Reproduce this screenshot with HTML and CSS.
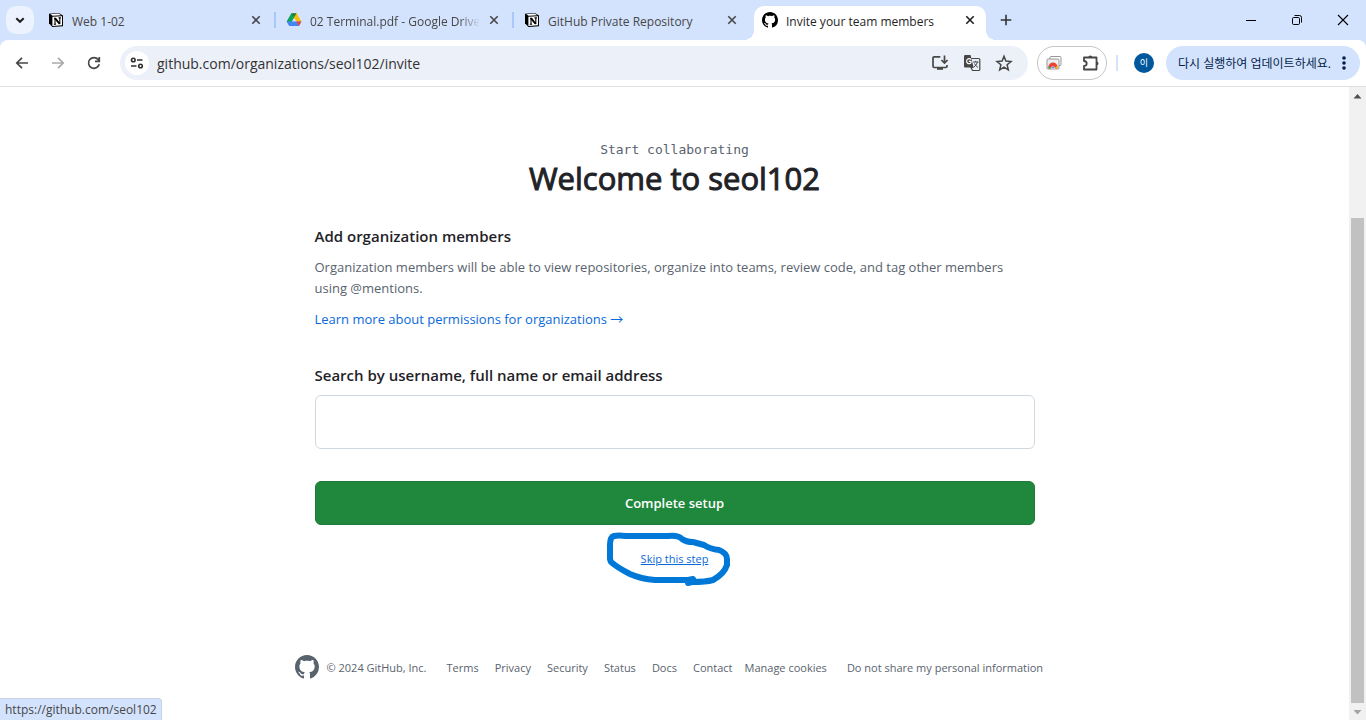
FILE: index.html
```html
<!DOCTYPE html>
<html lang="en">
<head>
<meta charset="utf-8">
<title>Invite your team members</title>
<link rel="stylesheet" href="styles.css">
</head>
<body>
<svg class="defs" aria-hidden="true">
  <symbol id="github" viewBox="0 0 16 16"><path d="M8 0C3.58 0 0 3.58 0 8c0 3.54 2.29 6.53 5.47 7.59.4.07.55-.17.55-.38 0-.19-.01-.82-.01-1.49-2.01.37-2.53-.49-2.69-.94-.09-.23-.48-.94-.82-1.13-.28-.15-.68-.52-.01-.53.63-.01 1.08.58 1.23.82.72 1.21 1.87.87 2.33.66.07-.52.28-.87.51-1.07-1.78-.2-3.64-.89-3.64-3.95 0-.87.31-1.59.82-2.15-.08-.2-.36-1.02.08-2.12 0 0 .67-.21 2.2.82.64-.18 1.32-.27 2-.27s1.36.09 2 .27c1.53-1.04 2.2-.82 2.2-.82.44 1.1.16 1.92.08 2.12.51.56.82 1.27.82 2.15 0 3.07-1.87 3.75-3.65 3.95.29.25.54.73.54 1.48 0 1.07-.01 1.93-.01 2.2 0 .21.15.46.55.38A8.01 8.01 0 0 0 16 8c0-4.42-3.58-8-8-8z"/></symbol>
  <symbol id="notion" viewBox="0 0 16 16"><path d="M1 1.8 10.8.9 15 3.6V14.2L4.4 15 1 11.2z" fill="#000"/><path d="M2.4 2.2 10.6 1.5 13.2 3.2 4.6 3.8z" fill="#fff"/><path d="M4.4 4.8 14 4.2V13.3L4.4 13.9z" fill="#fff"/><path d="M6 6.2h1.5l4 5.4M7 6v6.2M11.8 5.8v6.2M5.8 12.2h2.3M10.5 5.9h2.4" fill="none" stroke="#000" stroke-width="1.1"/><path d="M7 6.4l4.7 5.6" stroke="#000" stroke-width="1.7"/></symbol>
  <symbol id="close" viewBox="0 0 16 16"><path d="M4.3 4.3l7.4 7.4M11.7 4.3l-7.4 7.4" fill="none" stroke="currentColor" stroke-width="1.6"/></symbol>
</svg>
<div class="browser">
  <header class="tabstrip">
    <button class="tabsearch" aria-label="Search tabs"><svg class="icon" viewBox="0 0 16 16"><path d="M4.3 6.2 8 9.8l3.7-3.6" fill="none" stroke="#1f1f1f" stroke-width="2"/></svg></button>
    <nav class="tabs" aria-label="Tabs">
      <div class="tab"><svg class="icon"><use href="#notion"/></svg><span class="tab-title">Web 1-02</span><button class="tab-close" aria-label="Close tab"><svg class="icon"><use href="#close"/></svg></button></div>
      <div class="tab"><svg class="icon" viewBox="0 0 16 16"><path d="M5.5 1.3h5L8 5.6 3.4 13.8.8 9.6z" fill="#12a15b"/><path d="M5.5 1.3h5l4.9 8.3h-5z" fill="#fbbc04"/><path d="M5.5 1.3 8 5.6 5.6 9.6H.8z" fill="#12a15b"/><path d="M5.5 1.3h5L8 5.6z" fill="#168043"/><path d="M.7 9.6h9.7l5 0-2.6 4.4H3.3z" fill="#4285f4"/><path d="M10.4 9.6h5l-2.6 4.4z" fill="#ea4335"/></svg><span class="tab-title tab-title-fade">02 Terminal.pdf - Google Drive</span><button class="tab-close" aria-label="Close tab"><svg class="icon"><use href="#close"/></svg></button></div>
      <div class="tab tab-last"><svg class="icon"><use href="#notion"/></svg><span class="tab-title">GitHub Private Repository</span><button class="tab-close" aria-label="Close tab"><svg class="icon"><use href="#close"/></svg></button></div>
      <div class="tab tab-active"><svg class="icon"><use href="#github"/></svg><span class="tab-title">Invite your team members</span><button class="tab-close" aria-label="Close tab"><svg class="icon"><use href="#close"/></svg></button></div>
    </nav>
    <button class="newtab" aria-label="New tab"><svg class="icon" viewBox="0 0 16 16"><path d="M8 2.7v10.6M2.7 8h10.6" stroke="#333" stroke-width="1.6"/></svg></button>
    <div class="window-controls">
      <button aria-label="Minimize"><svg class="icon" viewBox="0 0 16 16"><path d="M3 8.5h10" stroke="#000"/></svg></button>
      <button aria-label="Restore"><svg class="icon" viewBox="0 0 16 16" fill="none" stroke="#000"><rect x="3.5" y="5.5" width="7" height="7" rx="1.2"/><path d="M5.5 3.5h5a2 2 0 0 1 2 2v5"/></svg></button>
      <button aria-label="Close"><svg class="icon" viewBox="0 0 16 16"><path d="M3 3l10 10M13 3 3 13" stroke="#000" stroke-width="1.1"/></svg></button>
    </div>
  </header>
  <div class="toolbar-wrap">
  <div class="toolbar">
    <div class="nav-buttons">
      <button aria-label="Back"><svg class="icon" viewBox="0 0 16 16" fill="none" stroke="#474747" stroke-width="1.7"><path d="M14 8H3M8 2.8 2.8 8 8 13.2"/></svg></button>
      <button aria-label="Forward" disabled><svg class="icon" viewBox="0 0 16 16" fill="none" stroke="#a9a9a9" stroke-width="1.7"><path d="M2 8h11M8 2.8 13.2 8 8 13.2"/></svg></button>
      <button aria-label="Reload"><svg class="icon" viewBox="0 0 16 16" fill="none" stroke="#474747" stroke-width="1.7"><path d="M13.2 9.2A5.4 5.4 0 1 1 12.2 4.6L13 5.8M13.3 2v4.4H9"/></svg></button>
    </div>
    <div class="omnibox">
      <button class="site-info" aria-label="View site information"><svg class="icon" viewBox="0 0 16 16" fill="none" stroke="#303030" stroke-width="1.6"><circle cx="4.3" cy="5" r="1.8"/><path d="M8 5h5.5M2 11h5.5"/><circle cx="11.5" cy="11" r="1.8"/></svg></button>
      <input class="url" type="text" aria-label="Address" value="github.com/organizations/seol102/invite">
      <div class="omni-actions">
        <button aria-label="Install app"><svg class="icon" viewBox="0 0 18 18" fill="none" stroke="#474747" stroke-width="1.7"><path d="M9.3 2.8H3.2q-1.2 0-1.2 1.2v8.3q0 1.2 1.2 1.2h11.6q1.2 0 1.2-1.2V11M13.5 1.5v7M10.4 6l3.1 3.1L16.6 6"/><path d="M6 14.8h6" stroke-width="2"/></svg></button>
        <button aria-label="Translate"><svg class="icon" viewBox="0 0 18 18"><path d="M2.2 1h5.4l3 12.5H2.2Q1 13.500 1 12.300V2.200Q1 1 2.200 1z" fill="#474747"/><path d="M8.300 4.500h7.500q1 0 1 1v10q0 1-1 1H9.500L8 13.500h2.600" fill="none" stroke="#474747" stroke-width="1.200"/><path d="M8 5.500A2.500 2.500 0 1 0 8 8.800V7.400H5.800" fill="none" stroke="#fff" stroke-width="1.200"/><path d="M10 8h5.500M12.700 6.800V8M14.500 8q-.8 3-3.500 5M11.500 9.500q1 2.300 3.500 4" fill="none" stroke="#474747"/></svg></button>
        <button aria-label="Bookmark"><svg class="icon" viewBox="0 0 18 18"><path d="M9 2.300l1.900 4.800 5.100.4-3.900 3.300 1.200 5L9 13.100l-4.300 2.700 1.200-5L2 7.500l5.100-.4z" fill="none" stroke="#474747" stroke-width="1.500"/></svg></button>
      </div>
    </div>
    <div class="extensions">
      <button aria-label="Extension"><svg class="icon" viewBox="0 0 18 18"><rect x="5" y="2.500" width="11" height="9" rx="1" fill="#fff" stroke="#999"/><rect x="2" y="5" width="12" height="10" rx="1" fill="#eee" stroke="#999"/><path d="M3.500 14.500V13a4.500 4.500 0 0 1 9 0v1.500z" fill="#ea4335"/><path d="M3.500 11.500 6.500 14.500h-3z" fill="#34a853"/><path d="M12.500 11.500v3h-3z" fill="#fbbc04"/><path d="M6 14.500a2 2 0 0 1 4 0z" fill="#4285f4" stroke="#fff" stroke-width=".5"/></svg></button>
      <button aria-label="Extensions"><svg class="icon" viewBox="0 0 18 18"><path d="M2 3.500h12.500V15.500H2V12q2.700-.2 2.700-2.500T2 7z" fill="none" stroke="#474747" stroke-width="1.800" stroke-linejoin="round"/><path d="M6.300 3.500a2 2 0 0 1 4 0zM14.500 7.500a2 2 0 0 1 0 4z" fill="#474747"/></svg></button>
    </div>
    <span class="divider"></span>
    <button class="avatar" aria-label="Profile">이</button>
    <button class="update"><span>다시 실행하여 업데이트하세요.</span><svg class="icon" viewBox="0 0 16 16" fill="#041e49"><circle cx="8" cy="3" r="1.800"/><circle cx="8" cy="8" r="1.800"/><circle cx="8" cy="13" r="1.800"/></svg></button>
  </div>
  </div>
  <div class="viewport">
    <div class="page">
      <main class="content">
        <div class="hero">
          <p class="eyebrow">Start collaborating</p>
          <h1>Welcome to seol102</h1>
        </div>
        <h2>Add organization members</h2>
        <p class="description">Organization members will be able to view repositories, organize into teams, review code, and tag other members using @mentions.</p>
        <a class="learn" href="#">Learn more about permissions for organizations →</a>
        <form class="invite">
          <label for="member">Search by username, full name or email address</label>
          <input id="member" type="text">
          <button type="button">Complete setup</button>
        </form>
        <div class="skip">
          <a href="#">Skip this step</a>
          <svg class="scribble" viewBox="0 0 126 56" aria-hidden="true"><path d="M4 27V13Q4 5 8 4Q12 3 20 4H62Q72 3 76 7Q80 10 87 10L98 13Q104 17 113 18Q121 21 121 27V33Q118 42 107 48Q100 50 86 50L82 51L87 47L82 48H49Q35 47 24 42Q12 36 5 30Q4 28 4 26" fill="none" stroke="#0078d7" stroke-width="6" stroke-linejoin="round" stroke-linecap="round"/></svg>
        </div>
      </main>
      <footer class="footer">
        <svg class="footer-logo"><use href="#github"/></svg>
        <span class="copyright">© 2024 GitHub, Inc.</span>
        <nav class="footer-links" aria-label="Footer">
          <a href="#">Terms</a><a href="#">Privacy</a><a href="#">Security</a><a href="#">Status</a><a href="#">Docs</a><a href="#">Contact</a>
        </nav>
        <button class="cookies">Manage cookies</button>
        <button class="personal">Do not share my personal information</button>
      </footer>
    </div>
    <div class="scrollbar" aria-hidden="true">
      <svg class="arrow" viewBox="0 0 17 17"><path d="M4.500 11.500h8l-4-4.500z" fill="#505050"/></svg>
      <div class="track"><div class="thumb"></div></div>
      <svg class="arrow" viewBox="0 0 17 17"><path d="M4.500 7h8l-4 4.500z" fill="#a3a3a3"/></svg>
    </div>
    <div class="status">https://github.com/seol102</div>
  </div>
</div>
</body>
</html>
```

FILE: styles.css
```css
* { box-sizing: border-box; }
body {
  margin: 0;
  font-family: "Open Sans", "Noto Sans", "Noto Sans CJK KR", sans-serif;
  font-size: 12px;
  color: #1f2328;
  background: #fff;
}
button { padding: 0; border: 0; background: none; font: inherit; color: inherit; }
button, .icon { flex: none; }
a { color: #0969da; text-decoration: none; }
p, h1, h2 { margin: 0; }
.defs { position: absolute; width: 0; height: 0; }
.icon { display: block; width: 16px; height: 16px; }
.browser { display: flex; flex-direction: column; height: 100vh; background: #d3e3fd; }

/* Tab strip */
.tabstrip { display: flex; align-items: center; height: 40px; padding-left: 6px; color: #474747; }
.tabsearch { display: grid; place-items: center; width: 28px; height: 28px; border-radius: 10px; background: #ecf2fe; }
.tabs { display: flex; gap: 6px; flex: 0 1 946px; min-width: 0; margin-left: 6px; align-self: flex-end; }
.tab { position: relative; display: flex; align-items: center; flex: 1 1 0; min-width: 0; height: 34px; padding: 0 8px; padding-bottom: 6px; border-radius: 10px 10px 0 0; }
.tab:not(.tab-active)::after { content: ""; position: absolute; right: -4px; top: 6px; width: 2px; height: 16px; background: #a8c7fa; }
.tab.tab-last::after { display: none; }
.tab-title { flex: 1; margin: 2px 6px 0 8px; overflow: hidden; white-space: nowrap; }
.tab-title-fade { mask-image: linear-gradient(to right, #000 88%, transparent); }
.tab-close { display: block; }
.tab-active { background: #fff; color: #1f1f1f; }
.tab-active::before, .tab-active::after { content: ""; position: absolute; bottom: 0; width: 10px; height: 10px; }
.tab-active::before { left: -10px; background: radial-gradient(circle at 0 0, transparent 10px, #fff 10px); }
.tab-active::after { right: -10px; background: radial-gradient(circle at 100% 0, transparent 10px, #fff 10px); }
.newtab { margin-left: 12px; }
.window-controls { display: flex; margin-left: auto; }
.window-controls button { display: grid; place-items: center; width: 46px; height: 40px; }

/* Toolbar */
.toolbar-wrap { border-bottom: 1px solid #dfe1e5; border-radius: 8px 8px 0 0; background: #fff; }
.toolbar { display: flex; align-items: center; height: 46px; padding: 0 6px 0 14px; }
.nav-buttons { display: flex; gap: 20px; }
.omnibox { display: flex; align-items: center; flex: 1; height: 34px; margin: 0 9px 0 18px; padding: 0 15px 0 5px; border-radius: 17px; background: #ecf0f9; }
.site-info { display: grid; place-items: center; width: 24px; height: 24px; border-radius: 12px; background: #fff; }
.url { flex: 1; min-width: 0; margin-left: 8px; padding: 0; border: 0; background: none; font: 14px "Open Sans", sans-serif; color: #333; outline: 0; }
.omni-actions { display: flex; gap: 14px; }
.omni-actions .icon, .extensions .icon { width: 18px; height: 18px; }
.extensions { display: flex; align-items: center; justify-content: space-between; width: 70px; height: 34px; padding: 0 6px 0 7px; border: 1px solid #c4c7c5; border-radius: 17px; }
.divider { width: 2px; height: 16px; margin: 0 16px 0 9px; background: #d3e3fd; }
.avatar { width: 20px; height: 20px; border-radius: 10px; background: #01579b; color: #fff; font-size: 9px; line-height: 20px; }
.update { display: flex; align-items: center; gap: 4px; height: 34px; min-width: 194px; justify-content: space-between; margin-left: 12px; padding: 0 8px 0 12px; border-radius: 17px; background: #d3e3fd; color: #041e49; }

/* Web page */
.viewport { position: relative; display: flex; flex: 1; min-height: 0; background: #fff; }
.page { display: flex; flex-direction: column; flex: 1; min-width: 0; overflow: hidden; }
.content { width: 100%; max-width: 720px; margin: 0 auto; padding-top: 53px; font-size: 13px; }
.hero { margin-bottom: 28px; text-align: center; }
.eyebrow { font: 13px/20px "DejaVu Sans Mono", monospace; color: #59636e; }
h1 { font-size: 31px; line-height: 36px; font-weight: 500; -webkit-text-stroke: 1px currentColor; }
h2, .invite label { font-size: 15px; line-height: 24px; font-weight: 600; }
.description { margin: 9px 0 10px; line-height: 21px; color: #59636e; }
.learn { display: block; line-height: 21px; }
.invite { display: flex; flex-direction: column; margin-top: 33px; }
.invite input { width: 100%; height: 54px; margin: 8px 0 32px; padding: 0 12px; border: 1px solid #d1d9e0; border-radius: 6px; font: inherit; }
.invite button { height: 44px; border: 1px solid #1f7a37; border-radius: 6px; background: #1f883d; color: #fff; font-weight: 600; }
.skip { position: relative; width: max-content; margin: 24px auto 0; font-size: 11px; line-height: 20px; }
.skip a { text-decoration: underline; }
.scribble { position: absolute; left: -35px; top: -17px; width: 126px; height: 56px; pointer-events: none; }
.footer { display: flex; align-items: center; width: 100%; max-width: 760px; margin: 86px auto 0; font-size: 11px; line-height: 20px; color: #59636e; white-space: nowrap; }
.footer-logo { flex: none; width: 24px; height: 24px; fill: #59636e; }
.copyright { margin: 2px 20px 0 8px; }
.footer-links { display: flex; gap: 16px; margin-top: 2px; }
.footer-links a { color: inherit; }
.cookies { margin: 2px 20px 0 12px; }
.personal { margin-top: 2px; }
.scrollbar { display: flex; flex-direction: column; width: 17px; background: #f1f1f1; }
.arrow { width: 17px; height: 17px; }
.track { display: flex; flex: 1; flex-direction: column; justify-content: flex-end; padding: 0 2px; }
.thumb { height: 81%; background: #c1c1c1; }
.status { position: absolute; left: 0; bottom: 0; height: 22px; padding: 0 4px 0 5px; border-top: 1px solid #c8d3e6; border-right: 1px solid #c8d3e6; border-radius: 0 4px 0 0; background: #d3e3fd; line-height: 22px; color: #474747; }
```
